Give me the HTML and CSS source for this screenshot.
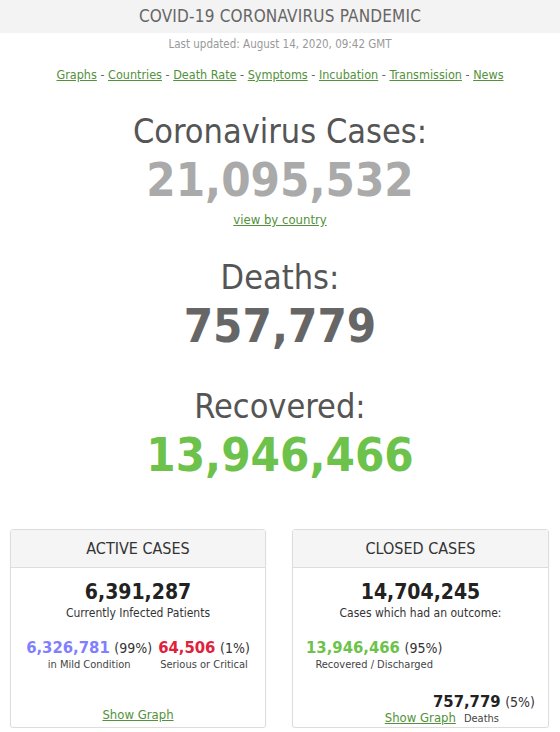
FILE: index.html
```html
<!DOCTYPE html>
<html>
<head>
<meta charset="utf-8">
<link rel="stylesheet" href="styles.css">
</head>
<body>
<div class="page">
  <div class="topbar">COVID-19 CORONAVIRUS PANDEMIC</div>
  <div class="updated">Last updated: August 14, 2020, 09:42 GMT</div>
  <nav class="nav">
    <a href="#">Graphs</a> - <a href="#">Countries</a> - <a href="#">Death Rate</a> - <a href="#">Symptoms</a> - <a href="#">Incubation</a> - <a href="#">Transmission</a> - <a href="#">News</a>
  </nav>

  <section class="stat stat-cases">
    <h1 class="stat-title">Coronavirus Cases:</h1>
    <div class="stat-num num-gray">21,095,532</div>
    <a class="stat-link" href="#">view by country</a>
  </section>

  <section class="stat stat-deaths">
    <h1 class="stat-title">Deaths:</h1>
    <div class="stat-num num-dark">757,779</div>
  </section>

  <section class="stat stat-recovered">
    <h1 class="stat-title">Recovered:</h1>
    <div class="stat-num num-green">13,946,466</div>
  </section>

  <div class="cards">
    <div class="card">
      <div class="card-head">ACTIVE CASES</div>
      <div class="card-body">
        <div class="card-total">6,391,287</div>
        <div class="card-sub">Currently Infected Patients</div>
        <div class="split">
          <div class="split-col">
            <div><span class="split-num purple">6,326,781</span> <span class="pct">(99%)</span></div>
            <div class="small">in Mild Condition</div>
          </div>
          <div class="split-col">
            <div><span class="split-num red">64,506</span> <span class="pct">(1%)</span></div>
            <div class="small">Serious or Critical</div>
          </div>
        </div>
        <div class="graph-row"><a class="graph-link" href="#">Show Graph</a></div>
      </div>
    </div>

    <div class="card">
      <div class="card-head">CLOSED CASES</div>
      <div class="card-body">
        <div class="card-total">14,704,245</div>
        <div class="card-sub">Cases which had an outcome:</div>
        <div class="closed-rec">
          <div><span class="split-num green">13,946,466</span> <span class="pct">(95%)</span></div>
          <div class="small">Recovered / Discharged</div>
        </div>
        <div class="closed-bottom">
          <div class="closed-num"><span class="split-num dark">757,779</span> <span class="pct">(5%)</span></div>
          <div class="closed-line">
            <a class="graph-link" href="#">Show Graph</a>
            <span class="small">Deaths</span>
          </div>
        </div>
      </div>
    </div>
  </div>
</div>
</body>
</html>
```

FILE: styles.css
```css
* { box-sizing: border-box; }
html, body { margin: 0; padding: 0; background: #fff; }
body {
  font-family: "DejaVu Sans Condensed", "DejaVu Sans", sans-serif;
  font-stretch: condensed;
  color: #333;
}
a { color: #52923a; }

.topbar {
  height: 33px;
  background: #f3f3f3;
  color: #666;
  font-size: 17px;
  line-height: 33px;
  text-align: center;
  letter-spacing: 0.2px;
}
.updated {
  margin-top: 4px;
  text-align: center;
  font-size: 11.5px;
  color: #999;
  line-height: 14px;
}
.nav {
  margin-top: 16px;
  text-align: center;
  font-size: 12.5px;
  line-height: 16px;
  color: #666;
}

.stat { text-align: center; }
.stat-title {
  margin: 0;
  font-weight: normal;
  color: #555;
  font-size: 34px;
  line-height: 42px;
}
.stat-num {
  font-weight: bold;
  font-size: 47px;
  line-height: 56px;
}
.num-gray { color: #aaa; }
.num-dark { color: #666; }
.num-green { color: #6cc24a; }
.stat-link {
  display: inline-block;
  font-size: 13px;
  line-height: 16px;
  margin-top: 4px;
}
.stat-cases { margin-top: 27px; }
.stat-deaths { margin-top: 28px; }
.stat-recovered { margin-top: 31px; }

.cards {
  display: grid;
  grid-template-columns: 256px 257px;
  column-gap: 26px;
  padding: 0 13px 0 10px;
  margin-top: 46px;
}
.card {
  border: 1px solid #ddd;
  border-radius: 3px;
  height: 199px;
  display: flex;
  flex-direction: column;
  box-shadow: 0 1px 2px rgba(0,0,0,0.05);
}
.card-head {
  height: 38px;
  background: #f5f5f5;
  border-bottom: 1px solid #ddd;
  text-align: center;
  font-size: 16px;
  line-height: 37px;
  color: #333;
}
.card-body {
  flex: 1;
  text-align: center;
  padding-top: 12px;
  display: flex;
  flex-direction: column;
}
.card-total {
  font-weight: bold;
  font-size: 21px;
  line-height: 24px;
  color: #222;
}
.card-sub {
  font-size: 12px;
  line-height: 14px;
  color: #333;
  margin-top: 2px;
}
.split {
  display: flex;
  justify-content: center;
  gap: 6px;
  margin-top: 18px;
}
.split-col { text-align: center; }
.split-num {
  font-weight: bold;
  font-size: 16.5px;
  line-height: 20px;
}
.pct { font-size: 14px; color: #333; }
.small { font-size: 11px; line-height: 14px; color: #444; }
.purple { color: #8080ff; }
.red { color: #e0213a; }
.green { color: #6cc24a; }
.dark { color: #222; }
.graph-row { margin-top: auto; padding-bottom: 4px; }
.graph-link { font-size: 13px; line-height: 16px; }

.closed-rec {
  align-self: flex-start;
  margin-left: 13px;
  margin-top: 18px;
  text-align: center;
}
.closed-bottom {
  margin-top: auto;
  padding-bottom: 1px;
}
.closed-num {
  text-align: right;
  padding-right: 13px;
  line-height: 20px;
}
.closed-line {
  display: flex;
  justify-content: flex-end;
  align-items: baseline;
  gap: 8px;
  padding-right: 49px;
  margin-top: -2px;
}
```
